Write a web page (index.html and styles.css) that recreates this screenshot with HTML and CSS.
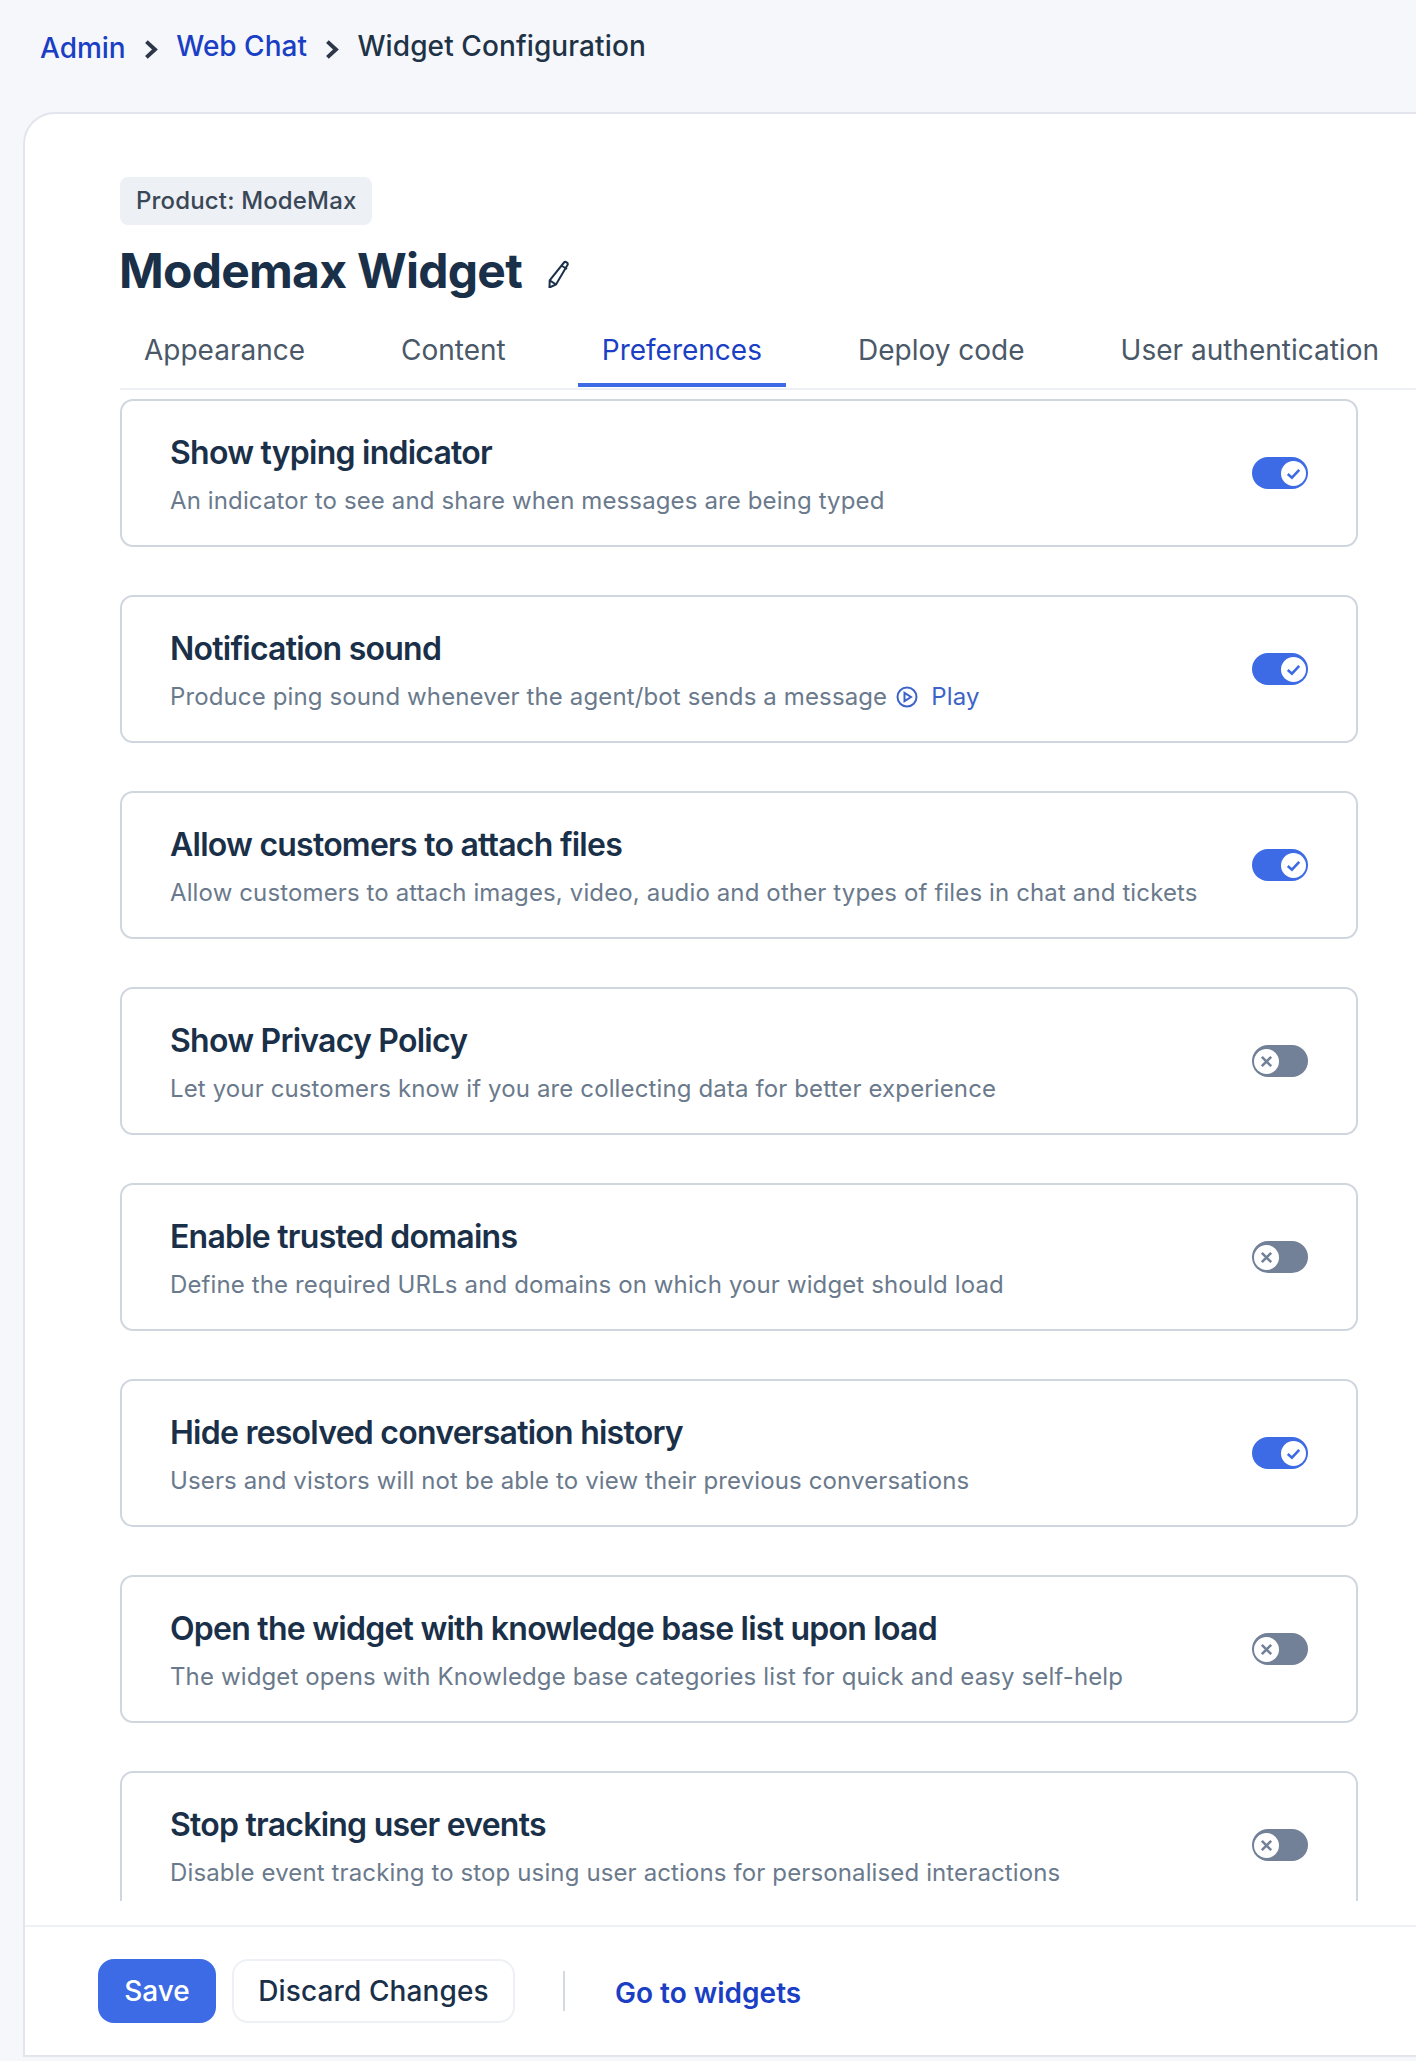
FILE: index.html
```html
<!DOCTYPE html>
<html lang="en">
<head>
<meta charset="utf-8">
<title>Widget Configuration</title>
<link rel="stylesheet" href="styles.css">
</head>
<body>
<nav class="crumbs">
  <a class="crumb crumb-first">Admin</a>
  <svg class="chev" viewBox="0 0 12 16"><path d="M2.500 2 9 8l-6.500 6"/></svg>
  <a class="crumb">Web Chat</a>
  <svg class="chev" viewBox="0 0 12 16"><path d="M2.500 2 9 8l-6.500 6"/></svg>
  <span class="crumb crumb-current">Widget Configuration</span>
</nav>
<main class="panel">
  <div class="head">
    <span class="badge">Product: ModeMax</span>
    <h1 class="title">Modemax Widget
      <svg class="pencil" viewBox="0 0 24 28"><path d="M17 2.500c1.300-1.500 4.500.3 3.600 2.300L9 24.500l-6.500 3 .2-7.200zM2.700 20.300 9 24.500M15 6l5 3"/></svg>
    </h1>
    <div class="tabs">
      <a class="tab">Appearance</a>
      <a class="tab">Content</a>
      <a class="tab tab-active">Preferences</a>
      <a class="tab">Deploy code</a>
      <a class="tab">User authentication</a>
    </div>
  </div>
  <div class="list">
    <section class="row">
      <div class="row-text"><h2 class="row-title">Show typing indicator</h2><p class="row-desc">An indicator to see and share when messages are being typed</p></div>
      <span class="toggle on"><span class="knob"><svg viewBox="0 0 24 24"><path d="M6.500 12.500 10.500 16 17.500 8.500"/></svg></span></span>
    </section>
    <section class="row">
      <div class="row-text"><h2 class="row-title">Notification sound</h2><p class="row-desc">Produce ping sound whenever the agent/bot sends a message<a class="play"><svg class="play-icon" viewBox="0 0 22 22"><circle cx="11" cy="11" r="9.500"/><path d="M8.500 6.800 15 11l-6.500 4.200z"/></svg>Play</a></p></div>
      <span class="toggle on"><span class="knob"><svg viewBox="0 0 24 24"><path d="M6.500 12.500 10.500 16 17.500 8.500"/></svg></span></span>
    </section>
    <section class="row">
      <div class="row-text"><h2 class="row-title">Allow customers to attach files</h2><p class="row-desc">Allow customers to attach images, video, audio and other types of files in chat and tickets</p></div>
      <span class="toggle on"><span class="knob"><svg viewBox="0 0 24 24"><path d="M6.500 12.500 10.500 16 17.500 8.500"/></svg></span></span>
    </section>
    <section class="row">
      <div class="row-text"><h2 class="row-title">Show Privacy Policy</h2><p class="row-desc">Let your customers know if you are collecting data for better experience</p></div>
      <span class="toggle off"><span class="knob"><svg viewBox="0 0 24 24"><path d="M7.500 7.500l9 9M16.500 7.500l-9 9"/></svg></span></span>
    </section>
    <section class="row">
      <div class="row-text"><h2 class="row-title">Enable trusted domains</h2><p class="row-desc">Define the required URLs and domains on which your widget should load</p></div>
      <span class="toggle off"><span class="knob"><svg viewBox="0 0 24 24"><path d="M7.500 7.500l9 9M16.500 7.500l-9 9"/></svg></span></span>
    </section>
    <section class="row">
      <div class="row-text"><h2 class="row-title">Hide resolved conversation history</h2><p class="row-desc">Users and vistors will not be able to view their previous conversations</p></div>
      <span class="toggle on"><span class="knob"><svg viewBox="0 0 24 24"><path d="M6.500 12.500 10.500 16 17.500 8.500"/></svg></span></span>
    </section>
    <section class="row">
      <div class="row-text"><h2 class="row-title">Open the widget with knowledge base list upon load</h2><p class="row-desc">The widget opens with Knowledge base categories list for quick and easy self-help</p></div>
      <span class="toggle off"><span class="knob"><svg viewBox="0 0 24 24"><path d="M7.500 7.500l9 9M16.500 7.500l-9 9"/></svg></span></span>
    </section>
    <section class="row">
      <div class="row-text"><h2 class="row-title">Stop tracking user events</h2><p class="row-desc">Disable event tracking to stop using user actions for personalised interactions</p></div>
      <span class="toggle off"><span class="knob"><svg viewBox="0 0 24 24"><path d="M7.500 7.500l9 9M16.500 7.500l-9 9"/></svg></span></span>
    </section>
  </div>
  <footer class="foot">
    <button class="btn btn-save">Save</button>
    <button class="btn btn-discard">Discard Changes</button>
    <span class="vr"></span>
    <a class="back">Go to widgets</a>
  </footer>
</main>
</body>
</html>
```

FILE: styles.css
```css
* { box-sizing: border-box; }
html, body { margin: 0; padding: 0; }
body {
  width: 1416px;
  height: 2061px;
  overflow: hidden;
  background: #f5f7fb;
  font-family: Inter, "Liberation Sans", sans-serif;
  color: #1a3049;
}
.crumbs {
  height: 112px;
  padding: 25px 0 0 40px;
  display: flex;
  align-items: flex-start;
  font-size: 28px;
  line-height: 42px;
  font-weight: 500;
}
.crumb { color: #1a3fc4; }
.crumb-first { margin-top: 2px; }
.crumb-current { color: #1f3347; letter-spacing: 0.1px; }
.chev {
  width: 16px;
  height: 21px;
  margin: 14px 17px 0 17.500px;
  fill: none;
  stroke: #2d3748;
  stroke-width: 3;
}
.panel {
  margin-left: 23px;
  width: 1500px;
  height: 1945px;
  background: #fff;
  border: 2px solid #e2e6ec;
  border-radius: 32px 0 0 0;
  display: flex;
  flex-direction: column;
}
.head { padding: 63px 0 0 95px; }
.badge {
  display: inline-block;
  height: 48px;
  padding: 0 16px;
  line-height: 48px;
  background: #edf0f4;
  border-radius: 8px;
  font-size: 24px;
  font-weight: 500;
  letter-spacing: 0.16px;
  color: #3a4757;
}
.title {
  margin: 14px 0 0 -1px;
  display: flex;
  align-items: center;
  font-size: 48px;
  line-height: 64px;
  font-weight: 700;
  letter-spacing: -0.75px;
  color: #1a3049;
}
.pencil {
  width: 24px;
  height: 28px;
  margin: 5px 0 0 25px;
  fill: none;
  stroke: #1a3049;
  stroke-width: 2;
}
.tabs {
  display: flex;
  gap: 48px;
  height: 73px;
  margin-top: 14px;
  border-bottom: 2px solid #edf0f4;
  font-size: 28px;
  color: #4a5868;
}
.tab { padding: 0 24px; height: 70px; line-height: 66px; }
.tab-active { color: #1a3fc4; border-bottom: 4px solid #3d6be5; }
.list {
  margin: 9px 0 0 95px;
  width: 1238px;
  height: 1502px;
  overflow: hidden;
  display: flex;
  flex-direction: column;
  gap: 48px;
  flex: none;
}
.row {
  flex: none;
  height: 148px;
  padding: 0 48px 0 48px;
  border: 2px solid #d0d6de;
  border-radius: 13px;
  display: flex;
  align-items: center;
  justify-content: space-between;
}
.row-text { padding-top: 2px; }
.row-title { margin: 0; font-size: 32px; line-height: 48px; font-weight: 600; letter-spacing: -0.76px; color: #1a3049; }
.row-desc { margin: 6px 0 0; font-size: 24px; line-height: 36px; letter-spacing: 0.125px; color: #6a7a8c; }
.play { color: #3d63c9; }
.play-icon {
  width: 22px;
  height: 22px;
  margin: 0 13px 0 9px;
  vertical-align: -3px;
  fill: none;
  stroke: #3d63c9;
  stroke-width: 2;
}
.toggle {
  flex: none;
  width: 56px;
  height: 32px;
  border-radius: 16px;
  display: flex;
  align-items: center;
  padding: 0 2px;
}
.toggle.on { background: #3d6be5; justify-content: flex-end; }
.toggle.off { background: #728197; justify-content: flex-start; }
.knob {
  width: 25px;
  height: 25px;
  border-radius: 50%;
  background: #fff;
  display: block;
}
.knob svg { display: block; width: 25px; height: 25px; fill: none; stroke-width: 2.500; }
.on .knob svg { stroke: #3d6be5; }
.off .knob svg { stroke: #728197; }
.foot {
  margin-top: 24px;
  border-top: 2px solid #edf0f4;
  padding: 32px 0 0 73px;
  display: flex;
  align-items: flex-start;
}
.btn {
  height: 64px;
  border-radius: 16px;
  font-family: inherit;
  font-size: 28px;
  font-weight: 500;
}
.btn-save { width: 118px; background: #3d6be5; border: 0; color: #fff; }
.btn-discard { width: 283px; margin-left: 16px; background: #fff; border: 2px solid #edf0f4; color: #1a3049; letter-spacing: 0.12px; }
.vr { width: 2px; height: 40px; margin: 12px 0 0 48px; background: #d5dae1; }
.back { margin-left: 50px; font-size: 28px; font-weight: 600; line-height: 68px; color: #1a3fc4; }
```
